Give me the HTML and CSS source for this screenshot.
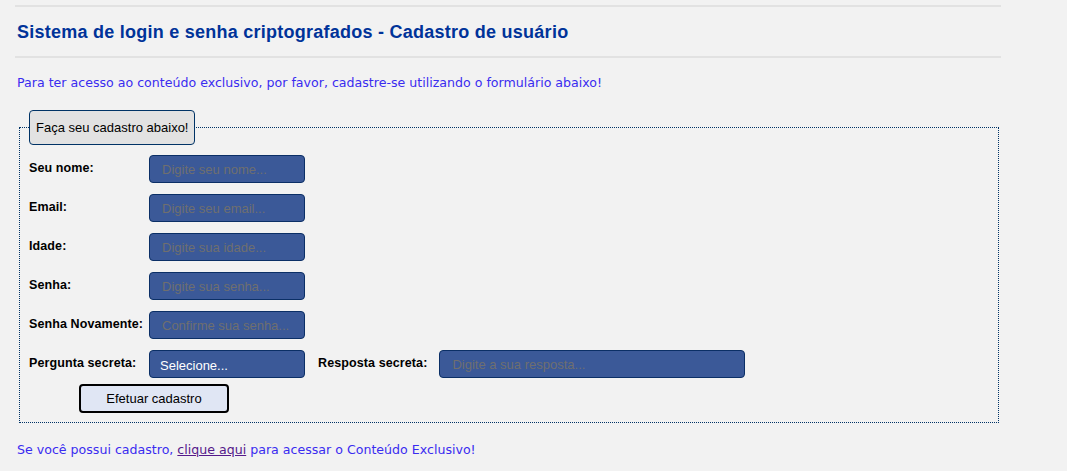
FILE: index.html
```html
<!DOCTYPE html>
<html lang="pt-BR">
<head>
<meta charset="utf-8">
<title>Cadastro de usuário</title>
<link rel="stylesheet" href="styles.css">
</head>
<body>
<div class="page">
  <hr class="rule rule-top">
  <h1 class="title">Sistema de login e senha criptografados - Cadastro de usuário</h1>
  <hr class="rule">
  <p class="intro">Para ter acesso ao conteúdo exclusivo, por favor, cadastre-se utilizando o formulário abaixo!</p>
  <form class="form">
    <fieldset class="box">
      <legend class="legend">Faça seu cadastro abaixo!</legend>
      <div class="row"><label class="lbl">Seu nome:</label><input class="field" type="text" placeholder="Digite seu nome..."></div>
      <div class="row"><label class="lbl">Email:</label><input class="field" type="text" placeholder="Digite seu email..."></div>
      <div class="row"><label class="lbl">Idade:</label><input class="field" type="text" placeholder="Digite sua idade..."></div>
      <div class="row"><label class="lbl">Senha:</label><input class="field" type="password" placeholder="Digite sua senha..."></div>
      <div class="row"><label class="lbl">Senha Novamente:</label><input class="field" type="password" placeholder="Confirme sua senha..."></div>
      <div class="row">
        <label class="lbl">Pergunta secreta:</label>
        <div class="field select">Selecione...</div>
        <label class="lbl lbl-inline">Resposta secreta:</label>
        <input class="field field-wide" type="text" placeholder="Digite a sua resposta...">
      </div>
      <div class="actions"><button class="btn" type="button">Efetuar cadastro</button></div>
    </fieldset>
  </form>
  <p class="outro">Se você possui cadastro, <a class="link" href="#">clique aqui</a> para acessar o Conteúdo Exclusivo!</p>
</div>
</body>
</html>
```
FILE: styles.css
```css
html, body {
  margin: 0;
  padding: 0;
  background: #f2f2f2;
}
body {
  font-family: "Liberation Sans", Arial, sans-serif;
  font-size: 13px;
}
.page {
  width: 986px;
  margin-left: 15px;
  padding-top: 5px;
}
.rule {
  border: 0;
  height: 2px;
  background: #e2e2e2;
  margin: 0;
}
.title {
  color: #003399;
  font-size: 18px;
  letter-spacing: 0.25px;
  font-weight: bold;
  margin: 0;
  padding: 0 2px;
  height: 49px;
  line-height: 51px;
}
.intro {
  color: #3a2cf0;
  font-family: "DejaVu Sans", sans-serif;
  font-size: 12.6px;
  margin: 17px 0 0 2px;
  line-height: 15px;
}
.form {
  margin: 20px 0 0 4px;
  width: 980px;
}
.box {
  border: 1px dotted #003366;
  margin: 0;
  padding: 10px 9px 9px 9px;
  min-width: 0;
}
.legend {
  background: #e2e2e2;
  border: 1px solid #003366;
  border-radius: 4px;
  padding: 0 6px;
  height: 33px;
  line-height: 33px;
  color: #000;
  font-size: 13px;
  margin-left: 0;
}
.row {
  display: flex;
  align-items: center;
  height: 28px;
  margin-bottom: 11px;
}
.lbl {
  width: 120px;
  flex: none;
  font-weight: bold;
  font-size: 12.5px;
  letter-spacing: 0.1px;
  color: #000;
  margin-top: -2px;
}
.lbl-inline {
  width: auto;
  margin-left: 13px;
  margin-right: 12px;
}
.field {
  box-sizing: border-box;
  width: 156px;
  height: 28px;
  flex: none;
  background: #3b5998;
  border: 1px solid #0b2f66;
  border-radius: 4px;
  padding: 0 12px;
  font-family: inherit;
  font-size: 13px;
  color: #fff;
  outline: none;
}
.field::placeholder {
  color: #6f6f6f;
}
.field-wide {
  width: 306px;
}
.select {
  display: flex;
  align-items: center;
  padding: 2px 10px 0;
}
.actions {
  padding-left: 50px;
  margin-top: -5px;
}
.btn {
  box-sizing: border-box;
  width: 150px;
  height: 29px;
  background: #e0e6f4;
  border: 2px solid #000;
  border-radius: 4px;
  font-family: inherit;
  font-size: 13px;
  color: #000;
  padding: 0;
}
.outro {
  color: #3a2cf0;
  font-family: "DejaVu Sans", sans-serif;
  font-size: 12.6px;
  margin: 19px 0 0 2px;
  line-height: 15px;
}
.link {
  color: #551a8b;
}
```
